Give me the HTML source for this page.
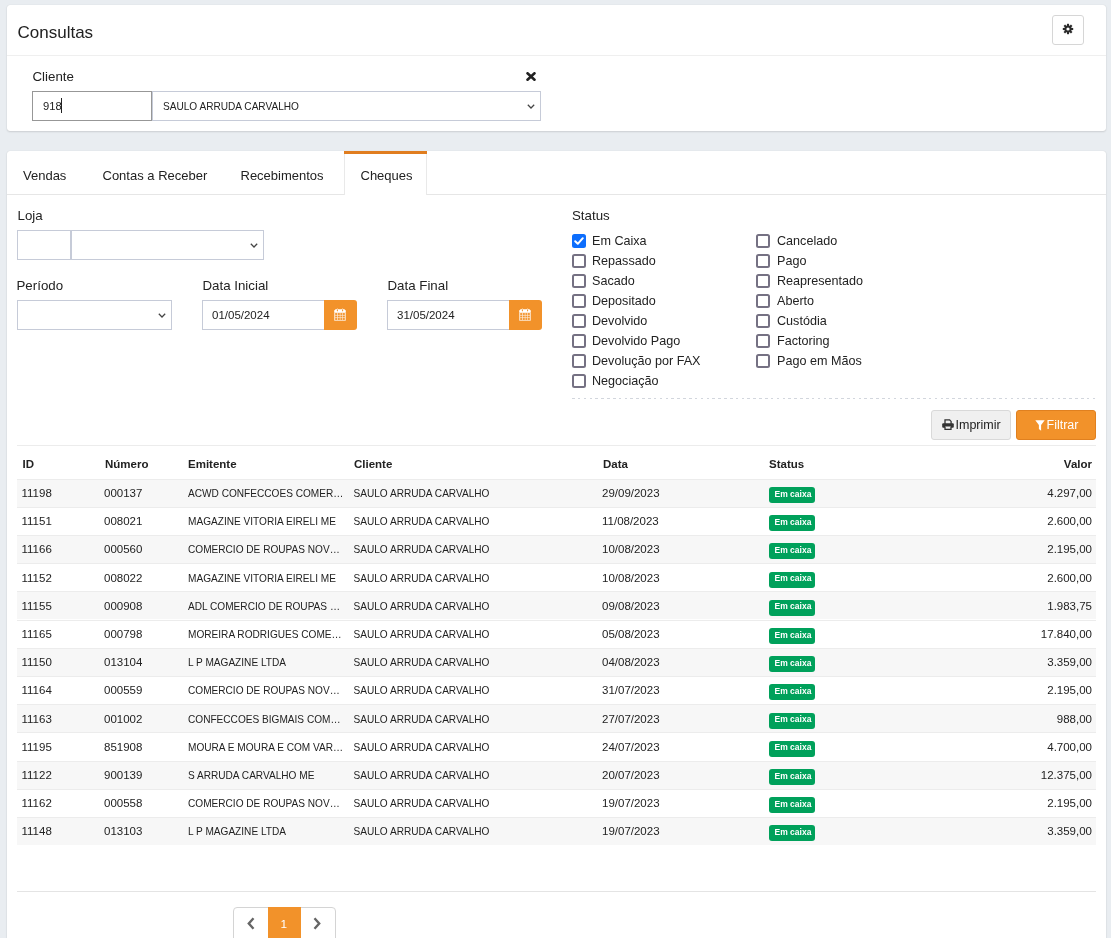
<!DOCTYPE html>
<html><head><meta charset="utf-8">
<style>
*{box-sizing:border-box;margin:0;padding:0}
html,body{width:1111px;height:938px;overflow:hidden}
body{background:#e9edf1;font-family:"Liberation Sans",sans-serif;color:#333;position:relative}
.a{position:absolute;white-space:nowrap}
.card{position:absolute;background:#fff;border-radius:3px;box-shadow:0 0 1px rgba(0,0,0,.18),0 1px 2px rgba(0,0,0,.12)}
.box{position:absolute;border:1px solid #c6cbd8;background:#fff}
.cb{position:absolute;width:14px;height:14px;border:2px solid #757183;border-radius:2.5px;background:#fff}
.row{position:absolute;left:17px;width:1079px;border-top:1px solid #ececec}
.row.s{background:#f7f7f7}
.badge{position:absolute;width:46px;height:16px;background:#00a15b;border-radius:3px}
.obtn{position:absolute;width:33px;height:30px;background:#f2922a;border-radius:0 3px 3px 0}
</style></head>
<body>
<div id="w" style="position:absolute;left:0;top:0;width:1111px;height:938px;will-change:transform">

<div class="card" style="left:7px;top:5px;width:1099px;height:126px"></div>
<div class="a" style="left:7px;top:55px;width:1099px;height:1px;background:#efefef"></div>
<div class="a" style="top:21.61px;font-size:17px;line-height:21px;color:#222;left:17.5px;">Consultas</div>
<div class="a" style="left:1052px;top:15px;width:32px;height:30px;border:1px solid #d6d6d6;border-radius:3px;background:#fff"></div>
<svg class="a" style="left:1062px;top:23.2px" width="12" height="12" viewBox="0 0 12 12"><g fill="#2a2a2a"><circle cx="6" cy="6" r="3.6"/><g stroke="#2a2a2a" stroke-width="2.1"><line x1="6" y1="0.8" x2="6" y2="11.2"/><line x1="0.8" y1="6" x2="11.2" y2="6"/><line x1="2.3" y1="2.3" x2="9.7" y2="9.7"/><line x1="9.7" y1="2.3" x2="2.3" y2="9.7"/></g></g><circle cx="6" cy="6" r="1.6" fill="#fff"/></svg>
<div class="a" style="top:67.89px;font-size:13.3px;line-height:17px;color:#222;left:32.5px;">Cliente</div>
<svg class="a" style="left:526px;top:72px" width="10" height="9" viewBox="0 0 10 9"><g stroke="#222" stroke-width="2.6" stroke-linecap="round"><line x1="1.5" y1="1.3" x2="8.5" y2="7.7"/><line x1="8.5" y1="1.3" x2="1.5" y2="7.7"/></g></svg>
<div class="box" style="left:152px;top:91px;width:389px;height:30px"></div>
<div class="box" style="left:32px;top:91px;width:120px;height:30px;border-color:#979797"></div>
<div class="a" style="top:99.12px;font-size:11.2px;line-height:14px;color:#222;left:43px;">918</div>
<div class="a" style="left:61px;top:98px;width:1px;height:15px;background:#222"></div>
<div class="a" style="top:100.00px;font-size:10.1px;line-height:13px;color:#222;left:163px;">SAULO ARRUDA CARVALHO</div>
<svg class="a" style="left:527px;top:104px" width="8" height="5" viewBox="0 0 8 5"><path d="M0.8 0.8 L4 4 L7.2 0.8" stroke="#444" stroke-width="1.25" fill="none"/></svg>
<div class="card" style="left:7px;top:151px;width:1099px;height:800px"></div>
<div class="a" style="left:7px;top:194px;width:1099px;height:1px;background:#e6e6e6"></div>
<div class="a" style="left:344px;top:151px;width:83px;height:44px;background:#fff;border-left:1px solid #e9e9e9;border-right:1px solid #e9e9e9"></div>
<div class="a" style="left:344px;top:151px;width:83px;height:3px;background:#e07d1f"></div>
<div class="a" style="top:167.50px;font-size:13px;line-height:16px;color:#222;left:23px;">Vendas</div>
<div class="a" style="top:167.50px;font-size:13px;line-height:16px;color:#222;left:102.5px;">Contas a Receber</div>
<div class="a" style="top:167.50px;font-size:13px;line-height:16px;color:#222;left:240.5px;">Recebimentos</div>
<div class="a" style="top:167.50px;font-size:13px;line-height:16px;color:#222;left:360.5px;">Cheques</div>
<div class="a" style="top:206.89px;font-size:13.3px;line-height:17px;color:#222;left:17.5px;">Loja</div>
<div class="box" style="left:71px;top:230px;width:193px;height:30px"></div>
<div class="box" style="left:17px;top:230px;width:54px;height:30px"></div>
<svg class="a" style="left:250px;top:243px" width="8" height="5" viewBox="0 0 8 5"><path d="M0.8 0.8 L4 4 L7.2 0.8" stroke="#444" stroke-width="1.25" fill="none"/></svg>
<div class="a" style="top:276.89px;font-size:13.3px;line-height:17px;color:#222;left:16.5px;">Período</div>
<div class="box" style="left:17px;top:300px;width:155px;height:30px"></div>
<svg class="a" style="left:158px;top:313px" width="8" height="5" viewBox="0 0 8 5"><path d="M0.8 0.8 L4 4 L7.2 0.8" stroke="#444" stroke-width="1.25" fill="none"/></svg>
<div class="a" style="top:276.89px;font-size:13.3px;line-height:17px;color:#222;left:202.5px;">Data Inicial</div>
<div class="box" style="left:202px;top:300px;width:123px;height:30px"></div>
<div class="a" style="top:308.02px;font-size:11.5px;line-height:14px;color:#222;left:212px;">01/05/2024</div>
<div class="obtn" style="left:324px;top:300px"></div>
<svg class="a" style="left:334px;top:308px" width="12" height="13" viewBox="0 0 12 13"><rect x="0.2" y="4.3" width="11.6" height="8.5" rx="0.6" fill="#fff" fill-opacity=".82"/><g fill="#f2922a"><rect x="1.2" y="5.1" width="2" height="1.8"/><rect x="3.9" y="5.1" width="1.9" height="1.8"/><rect x="6.4" y="5.1" width="1.9" height="1.8"/><rect x="8.9" y="5.1" width="1.9" height="1.8"/><rect x="1.2" y="7.6" width="2" height="1.8"/><rect x="3.9" y="7.6" width="1.9" height="1.8"/><rect x="6.4" y="7.6" width="1.9" height="1.8"/><rect x="8.9" y="7.6" width="1.9" height="1.8"/><rect x="1.2" y="10.1" width="2" height="1.8"/><rect x="3.9" y="10.1" width="1.9" height="1.8"/><rect x="6.4" y="10.1" width="1.9" height="1.8"/><rect x="8.9" y="10.1" width="1.9" height="1.8"/></g><path d="M0.2 2.4 L1.6 1.3 L2.3 1.3 L3.4 0.4 L4.5 1.3 L7.5 1.3 L8.6 0.4 L9.7 1.3 L10.4 1.3 L11.8 2.4 V4.6 H0.2 Z" fill="#fff"/><ellipse cx="3.4" cy="2.3" rx="0.6" ry="1.1" fill="#f2922a"/><ellipse cx="8.6" cy="2.3" rx="0.6" ry="1.1" fill="#f2922a"/></svg>
<div class="a" style="top:276.89px;font-size:13.3px;line-height:17px;color:#222;left:387.5px;">Data Final</div>
<div class="box" style="left:387px;top:300px;width:123px;height:30px"></div>
<div class="a" style="top:308.02px;font-size:11.5px;line-height:14px;color:#222;left:397px;">31/05/2024</div>
<div class="obtn" style="left:509px;top:300px"></div>
<svg class="a" style="left:519px;top:308px" width="12" height="13" viewBox="0 0 12 13"><rect x="0.2" y="4.3" width="11.6" height="8.5" rx="0.6" fill="#fff" fill-opacity=".82"/><g fill="#f2922a"><rect x="1.2" y="5.1" width="2" height="1.8"/><rect x="3.9" y="5.1" width="1.9" height="1.8"/><rect x="6.4" y="5.1" width="1.9" height="1.8"/><rect x="8.9" y="5.1" width="1.9" height="1.8"/><rect x="1.2" y="7.6" width="2" height="1.8"/><rect x="3.9" y="7.6" width="1.9" height="1.8"/><rect x="6.4" y="7.6" width="1.9" height="1.8"/><rect x="8.9" y="7.6" width="1.9" height="1.8"/><rect x="1.2" y="10.1" width="2" height="1.8"/><rect x="3.9" y="10.1" width="1.9" height="1.8"/><rect x="6.4" y="10.1" width="1.9" height="1.8"/><rect x="8.9" y="10.1" width="1.9" height="1.8"/></g><path d="M0.2 2.4 L1.6 1.3 L2.3 1.3 L3.4 0.4 L4.5 1.3 L7.5 1.3 L8.6 0.4 L9.7 1.3 L10.4 1.3 L11.8 2.4 V4.6 H0.2 Z" fill="#fff"/><ellipse cx="3.4" cy="2.3" rx="0.6" ry="1.1" fill="#f2922a"/><ellipse cx="8.6" cy="2.3" rx="0.6" ry="1.1" fill="#f2922a"/></svg>
<div class="a" style="top:206.89px;font-size:13.3px;line-height:17px;color:#222;left:572px;">Status</div>
<div class="cb" style="left:572px;top:234px;background:#0d6efd;border-color:#0d6efd"></div>
<svg class="a" style="left:572px;top:234px" width="14" height="14" viewBox="0 0 14 14"><path d="M3.2 7.2 L5.8 9.8 L10.8 4.2" stroke="#fff" stroke-width="2" fill="none" stroke-linecap="round" stroke-linejoin="round"/></svg>
<div class="a" style="top:232.63px;font-size:12.6px;line-height:16px;color:#222;left:592px;">Em Caixa</div>
<div class="cb" style="left:572px;top:254px"></div>
<div class="a" style="top:252.63px;font-size:12.6px;line-height:16px;color:#222;left:592px;">Repassado</div>
<div class="cb" style="left:572px;top:274px"></div>
<div class="a" style="top:272.63px;font-size:12.6px;line-height:16px;color:#222;left:592px;">Sacado</div>
<div class="cb" style="left:572px;top:294px"></div>
<div class="a" style="top:292.63px;font-size:12.6px;line-height:16px;color:#222;left:592px;">Depositado</div>
<div class="cb" style="left:572px;top:314px"></div>
<div class="a" style="top:312.63px;font-size:12.6px;line-height:16px;color:#222;left:592px;">Devolvido</div>
<div class="cb" style="left:572px;top:334px"></div>
<div class="a" style="top:332.63px;font-size:12.6px;line-height:16px;color:#222;left:592px;">Devolvido Pago</div>
<div class="cb" style="left:572px;top:354px"></div>
<div class="a" style="top:352.63px;font-size:12.6px;line-height:16px;color:#222;left:592px;">Devolução por FAX</div>
<div class="cb" style="left:572px;top:374px"></div>
<div class="a" style="top:372.63px;font-size:12.6px;line-height:16px;color:#222;left:592px;">Negociação</div>
<div class="cb" style="left:756px;top:234px"></div>
<div class="a" style="top:232.63px;font-size:12.6px;line-height:16px;color:#222;left:777px;">Cancelado</div>
<div class="cb" style="left:756px;top:254px"></div>
<div class="a" style="top:252.63px;font-size:12.6px;line-height:16px;color:#222;left:777px;">Pago</div>
<div class="cb" style="left:756px;top:274px"></div>
<div class="a" style="top:272.63px;font-size:12.6px;line-height:16px;color:#222;left:777px;">Reapresentado</div>
<div class="cb" style="left:756px;top:294px"></div>
<div class="a" style="top:292.63px;font-size:12.6px;line-height:16px;color:#222;left:777px;">Aberto</div>
<div class="cb" style="left:756px;top:314px"></div>
<div class="a" style="top:312.63px;font-size:12.6px;line-height:16px;color:#222;left:777px;">Custódia</div>
<div class="cb" style="left:756px;top:334px"></div>
<div class="a" style="top:332.63px;font-size:12.6px;line-height:16px;color:#222;left:777px;">Factoring</div>
<div class="cb" style="left:756px;top:354px"></div>
<div class="a" style="top:352.63px;font-size:12.6px;line-height:16px;color:#222;left:777px;">Pago em Mãos</div>
<div class="a" style="left:572px;top:398px;width:524px;height:1px;background:repeating-linear-gradient(90deg,#d2d6dd 0 2.6px,transparent 2.6px 5.85px)"></div>
<div class="a" style="left:931px;top:410px;width:80px;height:30px;background:#f0f0f0;border:1px solid #d9d9d9;border-radius:3px"></div>
<svg class="a" style="left:942px;top:419px" width="12" height="11" viewBox="0 0 12 11"><path d="M3 5V0.9h4.6l1.5 1.5V5" stroke="#333" stroke-width="1.3" fill="none"/><rect x="0.2" y="4.3" width="11.6" height="4.4" rx="1" fill="#333"/><path d="M3 7.5v2.9h6v-2.9" stroke="#333" stroke-width="1.3" fill="#f0f0f0"/></svg>
<div class="a" style="top:417.17px;font-size:12.5px;line-height:16px;color:#222;left:955.5px;">Imprimir</div>
<div class="a" style="left:1016px;top:410px;width:80px;height:30px;background:#f2922a;border:1px solid #e0801f;border-radius:3px"></div>
<svg class="a" style="left:1035px;top:420px" width="10" height="11" viewBox="0 0 10 11"><path d="M0.3 0.3h9.4l-3.6 4.6v5.8l-2.2-1.6v-4.2z" fill="#fff"/></svg>
<div class="a" style="top:417.17px;font-size:12.5px;line-height:16px;color:#fff;left:1046.5px;">Filtrar</div>
<div class="a" style="left:17px;top:445px;width:1079px;height:1px;background:#ececec"></div>
<div class="a" style="top:457.02px;font-size:11.5px;line-height:14px;color:#222;left:22.5px;font-weight:bold;">ID</div>
<div class="a" style="top:457.02px;font-size:11.5px;line-height:14px;color:#222;left:105px;font-weight:bold;">Número</div>
<div class="a" style="top:457.02px;font-size:11.5px;line-height:14px;color:#222;left:188px;font-weight:bold;">Emitente</div>
<div class="a" style="top:457.02px;font-size:11.5px;line-height:14px;color:#222;left:354px;font-weight:bold;">Cliente</div>
<div class="a" style="top:457.02px;font-size:11.5px;line-height:14px;color:#222;left:603px;font-weight:bold;">Data</div>
<div class="a" style="top:457.02px;font-size:11.5px;line-height:14px;color:#222;left:769px;font-weight:bold;">Status</div>
<div class="a" style="top:457.02px;font-size:11.5px;line-height:14px;color:#222;right:19px;font-weight:bold;">Valor</div>
<div class="row s" style="top:478.50px;height:28.20px"></div>
<div class="a" style="top:485.92px;font-size:11.5px;line-height:14px;color:#222;left:21.5px;">11198</div>
<div class="a" style="top:485.92px;font-size:11.5px;line-height:14px;color:#222;left:104px;">000137</div>
<div class="a" style="top:486.90px;font-size:10.1px;line-height:13px;color:#222;left:188px;">ACWD CONFECCOES COMER…</div>
<div class="a" style="top:486.90px;font-size:10.1px;line-height:13px;color:#222;left:353.5px;">SAULO ARRUDA CARVALHO</div>
<div class="a" style="top:485.92px;font-size:11.5px;line-height:14px;color:#222;left:602px;">29/09/2023</div>
<div class="badge" style="left:769px;top:487.00px"></div>
<div class="a" style="top:488.65px;font-size:8.5px;line-height:11px;color:#fff;left:774.5px;font-weight:bold;">Em caixa</div>
<div class="a" style="top:485.92px;font-size:11.5px;line-height:14px;color:#222;right:19px;">4.297,00</div>
<div class="row" style="top:506.70px;height:28.20px"></div>
<div class="a" style="top:514.12px;font-size:11.5px;line-height:14px;color:#222;left:21.5px;">11151</div>
<div class="a" style="top:514.12px;font-size:11.5px;line-height:14px;color:#222;left:104px;">008021</div>
<div class="a" style="top:515.10px;font-size:10.1px;line-height:13px;color:#222;left:188px;">MAGAZINE VITORIA EIRELI ME</div>
<div class="a" style="top:515.10px;font-size:10.1px;line-height:13px;color:#222;left:353.5px;">SAULO ARRUDA CARVALHO</div>
<div class="a" style="top:514.12px;font-size:11.5px;line-height:14px;color:#222;left:602px;">11/08/2023</div>
<div class="badge" style="left:769px;top:515.20px"></div>
<div class="a" style="top:516.85px;font-size:8.5px;line-height:11px;color:#fff;left:774.5px;font-weight:bold;">Em caixa</div>
<div class="a" style="top:514.12px;font-size:11.5px;line-height:14px;color:#222;right:19px;">2.600,00</div>
<div class="row s" style="top:534.90px;height:28.20px"></div>
<div class="a" style="top:542.32px;font-size:11.5px;line-height:14px;color:#222;left:21.5px;">11166</div>
<div class="a" style="top:542.32px;font-size:11.5px;line-height:14px;color:#222;left:104px;">000560</div>
<div class="a" style="top:543.30px;font-size:10.1px;line-height:13px;color:#222;left:188px;">COMERCIO DE ROUPAS NOV…</div>
<div class="a" style="top:543.30px;font-size:10.1px;line-height:13px;color:#222;left:353.5px;">SAULO ARRUDA CARVALHO</div>
<div class="a" style="top:542.32px;font-size:11.5px;line-height:14px;color:#222;left:602px;">10/08/2023</div>
<div class="badge" style="left:769px;top:543.40px"></div>
<div class="a" style="top:545.05px;font-size:8.5px;line-height:11px;color:#fff;left:774.5px;font-weight:bold;">Em caixa</div>
<div class="a" style="top:542.32px;font-size:11.5px;line-height:14px;color:#222;right:19px;">2.195,00</div>
<div class="row" style="top:563.10px;height:28.20px"></div>
<div class="a" style="top:570.52px;font-size:11.5px;line-height:14px;color:#222;left:21.5px;">11152</div>
<div class="a" style="top:570.52px;font-size:11.5px;line-height:14px;color:#222;left:104px;">008022</div>
<div class="a" style="top:571.50px;font-size:10.1px;line-height:13px;color:#222;left:188px;">MAGAZINE VITORIA EIRELI ME</div>
<div class="a" style="top:571.50px;font-size:10.1px;line-height:13px;color:#222;left:353.5px;">SAULO ARRUDA CARVALHO</div>
<div class="a" style="top:570.52px;font-size:11.5px;line-height:14px;color:#222;left:602px;">10/08/2023</div>
<div class="badge" style="left:769px;top:571.60px"></div>
<div class="a" style="top:573.25px;font-size:8.5px;line-height:11px;color:#fff;left:774.5px;font-weight:bold;">Em caixa</div>
<div class="a" style="top:570.52px;font-size:11.5px;line-height:14px;color:#222;right:19px;">2.600,00</div>
<div class="row s" style="top:591.30px;height:28.20px"></div>
<div class="a" style="top:598.72px;font-size:11.5px;line-height:14px;color:#222;left:21.5px;">11155</div>
<div class="a" style="top:598.72px;font-size:11.5px;line-height:14px;color:#222;left:104px;">000908</div>
<div class="a" style="top:599.70px;font-size:10.1px;line-height:13px;color:#222;left:188px;">ADL COMERCIO DE ROUPAS …</div>
<div class="a" style="top:599.70px;font-size:10.1px;line-height:13px;color:#222;left:353.5px;">SAULO ARRUDA CARVALHO</div>
<div class="a" style="top:598.72px;font-size:11.5px;line-height:14px;color:#222;left:602px;">09/08/2023</div>
<div class="badge" style="left:769px;top:599.80px"></div>
<div class="a" style="top:601.45px;font-size:8.5px;line-height:11px;color:#fff;left:774.5px;font-weight:bold;">Em caixa</div>
<div class="a" style="top:598.72px;font-size:11.5px;line-height:14px;color:#222;right:19px;">1.983,75</div>
<div class="row" style="top:619.50px;height:28.20px"></div>
<div class="a" style="top:626.92px;font-size:11.5px;line-height:14px;color:#222;left:21.5px;">11165</div>
<div class="a" style="top:626.92px;font-size:11.5px;line-height:14px;color:#222;left:104px;">000798</div>
<div class="a" style="top:627.90px;font-size:10.1px;line-height:13px;color:#222;left:188px;">MOREIRA RODRIGUES COME…</div>
<div class="a" style="top:627.90px;font-size:10.1px;line-height:13px;color:#222;left:353.5px;">SAULO ARRUDA CARVALHO</div>
<div class="a" style="top:626.92px;font-size:11.5px;line-height:14px;color:#222;left:602px;">05/08/2023</div>
<div class="badge" style="left:769px;top:628.00px"></div>
<div class="a" style="top:629.65px;font-size:8.5px;line-height:11px;color:#fff;left:774.5px;font-weight:bold;">Em caixa</div>
<div class="a" style="top:626.92px;font-size:11.5px;line-height:14px;color:#222;right:19px;">17.840,00</div>
<div class="row s" style="top:647.70px;height:28.20px"></div>
<div class="a" style="top:655.12px;font-size:11.5px;line-height:14px;color:#222;left:21.5px;">11150</div>
<div class="a" style="top:655.12px;font-size:11.5px;line-height:14px;color:#222;left:104px;">013104</div>
<div class="a" style="top:656.10px;font-size:10.1px;line-height:13px;color:#222;left:188px;">L P MAGAZINE LTDA</div>
<div class="a" style="top:656.10px;font-size:10.1px;line-height:13px;color:#222;left:353.5px;">SAULO ARRUDA CARVALHO</div>
<div class="a" style="top:655.12px;font-size:11.5px;line-height:14px;color:#222;left:602px;">04/08/2023</div>
<div class="badge" style="left:769px;top:656.20px"></div>
<div class="a" style="top:657.85px;font-size:8.5px;line-height:11px;color:#fff;left:774.5px;font-weight:bold;">Em caixa</div>
<div class="a" style="top:655.12px;font-size:11.5px;line-height:14px;color:#222;right:19px;">3.359,00</div>
<div class="row" style="top:675.90px;height:28.20px"></div>
<div class="a" style="top:683.32px;font-size:11.5px;line-height:14px;color:#222;left:21.5px;">11164</div>
<div class="a" style="top:683.32px;font-size:11.5px;line-height:14px;color:#222;left:104px;">000559</div>
<div class="a" style="top:684.30px;font-size:10.1px;line-height:13px;color:#222;left:188px;">COMERCIO DE ROUPAS NOV…</div>
<div class="a" style="top:684.30px;font-size:10.1px;line-height:13px;color:#222;left:353.5px;">SAULO ARRUDA CARVALHO</div>
<div class="a" style="top:683.32px;font-size:11.5px;line-height:14px;color:#222;left:602px;">31/07/2023</div>
<div class="badge" style="left:769px;top:684.40px"></div>
<div class="a" style="top:686.05px;font-size:8.5px;line-height:11px;color:#fff;left:774.5px;font-weight:bold;">Em caixa</div>
<div class="a" style="top:683.32px;font-size:11.5px;line-height:14px;color:#222;right:19px;">2.195,00</div>
<div class="row s" style="top:704.10px;height:28.20px"></div>
<div class="a" style="top:711.52px;font-size:11.5px;line-height:14px;color:#222;left:21.5px;">11163</div>
<div class="a" style="top:711.52px;font-size:11.5px;line-height:14px;color:#222;left:104px;">001002</div>
<div class="a" style="top:712.50px;font-size:10.1px;line-height:13px;color:#222;left:188px;">CONFECCOES BIGMAIS COM…</div>
<div class="a" style="top:712.50px;font-size:10.1px;line-height:13px;color:#222;left:353.5px;">SAULO ARRUDA CARVALHO</div>
<div class="a" style="top:711.52px;font-size:11.5px;line-height:14px;color:#222;left:602px;">27/07/2023</div>
<div class="badge" style="left:769px;top:712.60px"></div>
<div class="a" style="top:714.25px;font-size:8.5px;line-height:11px;color:#fff;left:774.5px;font-weight:bold;">Em caixa</div>
<div class="a" style="top:711.52px;font-size:11.5px;line-height:14px;color:#222;right:19px;">988,00</div>
<div class="row" style="top:732.30px;height:28.20px"></div>
<div class="a" style="top:739.72px;font-size:11.5px;line-height:14px;color:#222;left:21.5px;">11195</div>
<div class="a" style="top:739.72px;font-size:11.5px;line-height:14px;color:#222;left:104px;">851908</div>
<div class="a" style="top:740.70px;font-size:10.1px;line-height:13px;color:#222;left:188px;">MOURA E MOURA E COM VAR…</div>
<div class="a" style="top:740.70px;font-size:10.1px;line-height:13px;color:#222;left:353.5px;">SAULO ARRUDA CARVALHO</div>
<div class="a" style="top:739.72px;font-size:11.5px;line-height:14px;color:#222;left:602px;">24/07/2023</div>
<div class="badge" style="left:769px;top:740.80px"></div>
<div class="a" style="top:742.45px;font-size:8.5px;line-height:11px;color:#fff;left:774.5px;font-weight:bold;">Em caixa</div>
<div class="a" style="top:739.72px;font-size:11.5px;line-height:14px;color:#222;right:19px;">4.700,00</div>
<div class="row s" style="top:760.50px;height:28.20px"></div>
<div class="a" style="top:767.92px;font-size:11.5px;line-height:14px;color:#222;left:21.5px;">11122</div>
<div class="a" style="top:767.92px;font-size:11.5px;line-height:14px;color:#222;left:104px;">900139</div>
<div class="a" style="top:768.90px;font-size:10.1px;line-height:13px;color:#222;left:188px;">S ARRUDA CARVALHO ME</div>
<div class="a" style="top:768.90px;font-size:10.1px;line-height:13px;color:#222;left:353.5px;">SAULO ARRUDA CARVALHO</div>
<div class="a" style="top:767.92px;font-size:11.5px;line-height:14px;color:#222;left:602px;">20/07/2023</div>
<div class="badge" style="left:769px;top:769.00px"></div>
<div class="a" style="top:770.65px;font-size:8.5px;line-height:11px;color:#fff;left:774.5px;font-weight:bold;">Em caixa</div>
<div class="a" style="top:767.92px;font-size:11.5px;line-height:14px;color:#222;right:19px;">12.375,00</div>
<div class="row" style="top:788.70px;height:28.20px"></div>
<div class="a" style="top:796.12px;font-size:11.5px;line-height:14px;color:#222;left:21.5px;">11162</div>
<div class="a" style="top:796.12px;font-size:11.5px;line-height:14px;color:#222;left:104px;">000558</div>
<div class="a" style="top:797.10px;font-size:10.1px;line-height:13px;color:#222;left:188px;">COMERCIO DE ROUPAS NOV…</div>
<div class="a" style="top:797.10px;font-size:10.1px;line-height:13px;color:#222;left:353.5px;">SAULO ARRUDA CARVALHO</div>
<div class="a" style="top:796.12px;font-size:11.5px;line-height:14px;color:#222;left:602px;">19/07/2023</div>
<div class="badge" style="left:769px;top:797.20px"></div>
<div class="a" style="top:798.85px;font-size:8.5px;line-height:11px;color:#fff;left:774.5px;font-weight:bold;">Em caixa</div>
<div class="a" style="top:796.12px;font-size:11.5px;line-height:14px;color:#222;right:19px;">2.195,00</div>
<div class="row s" style="top:816.90px;height:28.20px"></div>
<div class="a" style="top:824.32px;font-size:11.5px;line-height:14px;color:#222;left:21.5px;">11148</div>
<div class="a" style="top:824.32px;font-size:11.5px;line-height:14px;color:#222;left:104px;">013103</div>
<div class="a" style="top:825.30px;font-size:10.1px;line-height:13px;color:#222;left:188px;">L P MAGAZINE LTDA</div>
<div class="a" style="top:825.30px;font-size:10.1px;line-height:13px;color:#222;left:353.5px;">SAULO ARRUDA CARVALHO</div>
<div class="a" style="top:824.32px;font-size:11.5px;line-height:14px;color:#222;left:602px;">19/07/2023</div>
<div class="badge" style="left:769px;top:825.40px"></div>
<div class="a" style="top:827.05px;font-size:8.5px;line-height:11px;color:#fff;left:774.5px;font-weight:bold;">Em caixa</div>
<div class="a" style="top:824.32px;font-size:11.5px;line-height:14px;color:#222;right:19px;">3.359,00</div>
<div class="a" style="left:17px;top:891px;width:1079px;height:1px;background:#e4e4e4"></div>
<div class="a" style="left:233px;top:907px;width:103px;height:40px;border:1px solid #d4d4d4;border-radius:4px;background:#fff"></div>
<div class="a" style="left:268px;top:907px;width:33px;height:40px;background:#f2922a"></div>
<div class="a" style="top:917.41px;font-size:11.8px;line-height:15px;color:#fff;left:280.5px;">1</div>
<svg class="a" style="left:247px;top:917px" width="8" height="13" viewBox="0 0 8 13"><path d="M6.5 1.2 L1.8 6.5 L6.5 11.8" stroke="#666" stroke-width="2.4" fill="none"/></svg>
<svg class="a" style="left:313px;top:917px" width="8" height="13" viewBox="0 0 8 13"><path d="M1.5 1.2 L6.2 6.5 L1.5 11.8" stroke="#666" stroke-width="2.4" fill="none"/></svg>
</div></body></html>
